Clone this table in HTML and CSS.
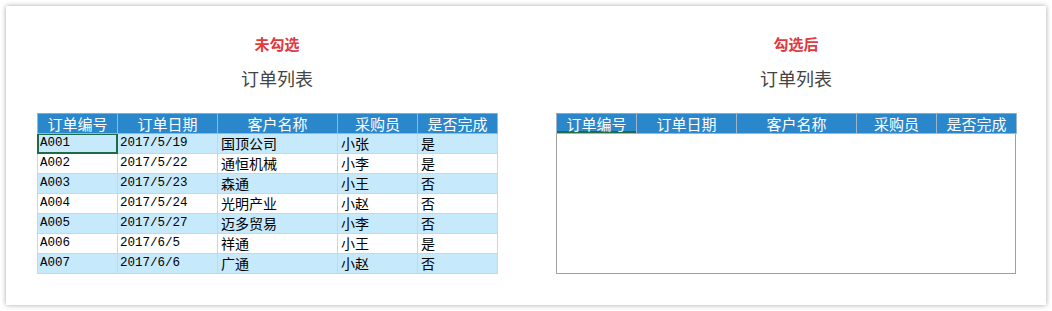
FILE: index.html
```html
<!DOCTYPE html>
<html lang="zh">
<head>
<meta charset="utf-8">
<title>订单列表</title>
<link rel="stylesheet" href="styles.css">
</head>
<body>
<div class="card">
  <section class="panel">
    <div class="label">未勾选</div>
    <div class="title">订单列表</div>
    <table class="grid">
      <colgroup><col class="c1"><col class="c2"><col class="c3"><col class="c4"><col class="c5"></colgroup>
      <thead>
        <tr><th>订单编号</th><th>订单日期</th><th>客户名称</th><th>采购员</th><th>是否完成</th></tr>
      </thead>
      <tbody>
        <tr class="alt"><td class="mono sel">A001</td><td class="mono">2017/5/19</td><td>国顶公司</td><td>小张</td><td>是</td></tr>
        <tr><td class="mono">A002</td><td class="mono">2017/5/22</td><td>通恒机械</td><td>小李</td><td>是</td></tr>
        <tr class="alt"><td class="mono">A003</td><td class="mono">2017/5/23</td><td>森通</td><td>小王</td><td>否</td></tr>
        <tr><td class="mono">A004</td><td class="mono">2017/5/24</td><td>光明产业</td><td>小赵</td><td>否</td></tr>
        <tr class="alt"><td class="mono">A005</td><td class="mono">2017/5/27</td><td>迈多贸易</td><td>小李</td><td>否</td></tr>
        <tr><td class="mono">A006</td><td class="mono">2017/6/5</td><td>祥通</td><td>小王</td><td>是</td></tr>
        <tr class="alt"><td class="mono">A007</td><td class="mono">2017/6/6</td><td>广通</td><td>小赵</td><td>否</td></tr>
      </tbody>
    </table>
  </section>
  <section class="panel">
    <div class="label">勾选后</div>
    <div class="title">订单列表</div>
    <div class="empty-box">
      <table class="grid grid-empty">
        <colgroup><col class="c1"><col class="c2"><col class="c3"><col class="c4"><col class="c5"></colgroup>
        <thead>
          <tr><th class="active">订单编号</th><th>订单日期</th><th>客户名称</th><th>采购员</th><th>是否完成</th></tr>
        </thead>
      </table>
    </div>
  </section>
</div>
</body>
</html>
```
FILE: styles.css
```css
html, body {
  margin: 0;
  padding: 0;
  background: #ffffff;
  font-family: "Noto Sans CJK SC", "Liberation Sans", sans-serif;
}

.card {
  margin: 6px;
  width: 1040px;
  height: 299px;
  box-sizing: border-box;
  background: #ffffff;
  box-shadow: 0 0 5px rgba(0, 0, 0, 0.35);
  padding: 30px 0 0 31px;
  display: flex;
  gap: 39px;
}

.panel {
  width: 480px;
  display: flex;
  flex-direction: column;
}

.label {
  text-align: center;
  color: #e0393e;
  font-weight: 700;
  font-size: 15px;
  line-height: 16px;
  height: 16px;
}

.title {
  margin-top: 14px;
  text-align: center;
  color: #444444;
  font-size: 18px;
  line-height: 24px;
  height: 24px;
  margin-bottom: 23px;
}

.grid {
  border-collapse: collapse;
  table-layout: fixed;
  width: 460px;
  border: 1px solid #9fa4a8;
}

.c1 { width: 80px; }
.c2 { width: 100px; }
.c3 { width: 120px; }
.c4 { width: 80px; }
.c5 { width: 80px; }

.grid th {
  background: #2b87cb;
  color: #ffffff;
  font-weight: 400;
  font-size: 15px;
  height: 19px;
  line-height: 19px;
  padding: 0;
  text-align: center;
  border: 1px solid #9fb6ca;
  border-top-color: #9fa4a8;
  white-space: nowrap;
}

.grid td {
  height: 19px;
  line-height: 19px;
  padding: 0 0 0 3px;
  font-size: 14px;
  color: #000000;
  border: 1px solid #d4d4d4;
  white-space: nowrap;
  overflow: hidden;
}

.grid td.mono {
  font-family: "Liberation Mono", "DejaVu Sans Mono", monospace;
  font-size: 12.5px;
  padding-left: 2px;
}

.grid tr.alt td {
  background: #c6e9fb;
}

.grid tr.alt td.sel,
.grid td.sel {
  border-color: #1f6b48;
  box-shadow: inset 1px 1px 0 #1f6b48, inset -1px -1px 0 #1f6b48;
}

.empty-box {
  width: 458px;
  height: 159px;
  border: 1px solid #a0a0a0;
}

.grid-empty {
  width: 460px;
  margin: -1px 0 0 -1px;
}

.grid-empty th.active {
  box-shadow: inset 0 -2px 0 #1f6b48;
}
```
